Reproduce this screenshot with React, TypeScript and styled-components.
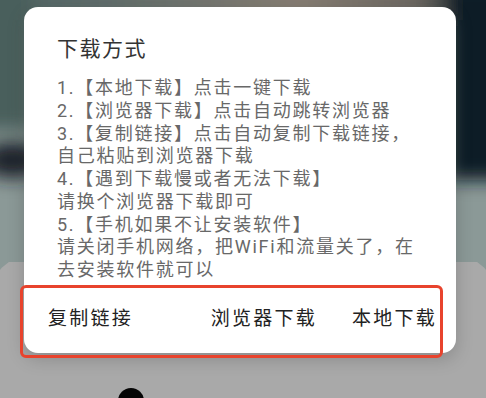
import * as React from "react";
import styled, { createGlobalStyle } from "styled-components";

const GlobalStyle = createGlobalStyle`
  html, body {
    margin: 0;
    padding: 0;
  }
  body {
    font-family: Roboto, "Noto Sans CJK SC", sans-serif;
  }
`;

const Screen = styled.div`
  position: relative;
  width: 486px;
  height: 398px;
  overflow: hidden;
  background: #8b9997;
`;

const Photo = styled.svg`
  display: block;
  width: 486px;
  height: 262px;
`;

const Sheet = styled.div`
  margin: -7px -10px 0;
  height: 200px;
  padding: 133px 0 0 128px;
  box-sizing: border-box;
  background: #a9a9a9;
  border-radius: 42px 42px 0 0;
`;

const Knob = styled.div`
  width: 26px;
  height: 26px;
  border-radius: 50%;
  background: #050505;
`;

const Dialog = styled.div`
  position: absolute;
  left: 24px;
  top: 7px;
  width: 432px;
  height: 346px;
  box-sizing: border-box;
  padding-top: 28px;

  display: flex;
  flex-direction: column;

  background: #fff;
  border-radius: 14px;
  box-shadow: 0 6px 18px rgba(0, 0, 0, 0.18);
`;

const Title = styled.h2`
  margin: 0;
  padding: 0 33px;
  font-size: 21px;
  line-height: 28px;
  font-weight: 400;
  letter-spacing: 1.5px;
  color: #333;
`;

const Body = styled.div`
  margin-top: 14px;
  padding: 0 30px 0 33px;
  font-size: 18px;
  line-height: 22.75px;
  letter-spacing: 1.75px;
  color: #686868;
`;

const Actions = styled.div`
  position: relative;
  margin-top: auto;
  height: 68px;
  padding: 0 19px 0 24px;

  display: flex;
  align-items: center;
  gap: 35px;
`;

const Spacer = styled.div`
  flex: 1;
`;

const ActionButton = styled.button`
  border: 0;
  padding: 0;
  background: none;
  font-family: Roboto, "Noto Sans CJK SC", sans-serif;
  font-size: 19px;
  line-height: 26px;
  letter-spacing: 2.25px;
  color: #222;
`;

const Highlight = styled.div`
  position: absolute;
  left: -4px;
  top: 0;
  right: 13px;
  bottom: -5px;
  border: 3px solid #e8432d;
  border-radius: 6px;
  pointer-events: none;
`;

const lines = [
  "1.【本地下载】点击一键下载",
  "2.【浏览器下载】点击自动跳转浏览器",
  "3.【复制链接】点击自动复制下载链接，",
  "自己粘贴到浏览器下载",
  "4.【遇到下载慢或者无法下载】",
  "请换个浏览器下载即可",
  "5.【手机如果不让安装软件】",
  "请关闭手机网络，把WiFi和流量关了，在",
  "去安装软件就可以",
];

const Backdrop = () => (
  <Photo viewBox="0 0 486 262" preserveAspectRatio="none">
    <defs>
      <filter id="blur" x="-20%" y="-20%" width="140%" height="140%">
        <feGaussianBlur stdDeviation="9" />
      </filter>
      <linearGradient id="topband" x1="0" x2="1" y1="0" y2="0">
        <stop offset="0" stopColor="#486060" />
        <stop offset="0.25" stopColor="#5f6c6a" />
        <stop offset="0.6" stopColor="#867d72" />
        <stop offset="0.82" stopColor="#6b6660" />
        <stop offset="0.93" stopColor="#0c2026" />
      </linearGradient>
    </defs>
    <rect x="0" y="0" width="486" height="262" fill="#8b9997" />
    <g filter="url(#blur)">
      <rect x="-30" y="-20" width="546" height="40" fill="url(#topband)" />
      <rect x="-30" y="-20" width="62" height="150" fill="#4a5f5c" />
      <ellipse cx="12" cy="160" rx="30" ry="18" fill="#1d2029" />
      <rect x="448" y="-20" width="70" height="200" fill="#0a1f25" />
    </g>
  </Photo>
);

const App = () => (
  <>
    <GlobalStyle />
    <Screen>
      <Backdrop />
      <Sheet>
        <Knob />
      </Sheet>
      <Dialog>
        <Title>下载方式</Title>
        <Body>
          {lines.map((line) => (
            <div key={line}>{line}</div>
          ))}
        </Body>
        <Actions>
          <ActionButton>复制链接</ActionButton>
          <Spacer />
          <ActionButton>浏览器下载</ActionButton>
          <ActionButton>本地下载</ActionButton>
          <Highlight />
        </Actions>
      </Dialog>
    </Screen>
  </>
);

export default App;
